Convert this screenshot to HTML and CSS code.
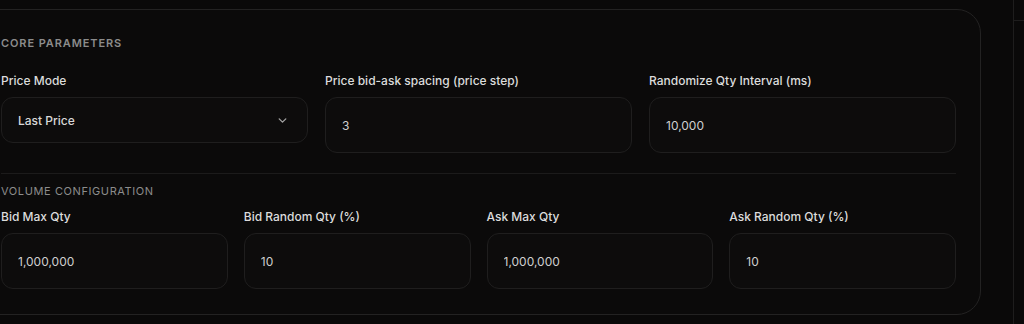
FILE: index.html
```html
<!DOCTYPE html>
<html lang="en">
<head>
    <meta charset="UTF-8">
    <meta name="viewport" content="width=device-width, initial-scale=1.0">
    <title>Market Maker Settings</title>
    <link rel="stylesheet" href="styles.css">
</head>
<body>
    <div class="layout">
        <main class="main">
            <section class="card">
                <h3 class="section-title strong">Core Parameters</h3>
                <div class="grid three">
                    <div class="field">
                        <label for="priceMode">Price Mode</label>
                        <div class="select" id="priceMode">
                            <span>Last Price</span>
                            <svg width="11" height="11" viewBox="0 0 10 10" fill="none">
                                <path d="M2 3.5L5 6.5L8 3.5" stroke="#a3a3a3" stroke-width="1.2" stroke-linecap="round" stroke-linejoin="round"/>
                            </svg>
                        </div>
                    </div>
                    <div class="field">
                        <label for="spacing">Price bid-ask spacing (price step)</label>
                        <input type="text" id="spacing" value="3">
                    </div>
                    <div class="field">
                        <label for="interval">Randomize Qty Interval (ms)</label>
                        <input type="text" id="interval" value="10,000">
                    </div>
                </div>

                <div class="divider"></div>

                <h3 class="section-title">Volume Configuration</h3>
                <div class="grid four">
                    <div class="field">
                        <label for="bidMax">Bid Max Qty</label>
                        <input type="text" id="bidMax" value="1,000,000">
                    </div>
                    <div class="field">
                        <label for="bidRandom">Bid Random Qty (%)</label>
                        <input type="text" id="bidRandom" value="10">
                    </div>
                    <div class="field">
                        <label for="askMax">Ask Max Qty</label>
                        <input type="text" id="askMax" value="1,000,000">
                    </div>
                    <div class="field">
                        <label for="askRandom">Ask Random Qty (%)</label>
                        <input type="text" id="askRandom" value="10">
                    </div>
                </div>
            </section>
        </main>
        <aside class="side">
            <div class="side-top"></div>
        </aside>
    </div>
</body>
</html>
```

FILE: styles.css
```css
* {
    box-sizing: border-box;
}
html, body {
    height: 100%;
}
body {
    margin: 0;
    background: #0a0909;
    font-family: Inter, "Noto Sans", sans-serif;
    color: #e5e5e5;
    overflow: hidden;
}
.layout {
    display: flex;
    height: 100%;
}
.main {
    width: 1013px;
    flex-shrink: 0;
    padding-top: 9px;
}
.card {
    width: 1005px;
    margin-left: -24px;
    border: 1px solid #232222;
    border-radius: 24px;
    padding: 25px 24px 25px;
    background: #0b0a0a;
}
.section-title {
    margin: 0 0 10px;
    font-size: 11px;
    line-height: 16px;
    font-weight: 400;
    text-transform: uppercase;
    letter-spacing: 0.6px;
    color: #8c8c8c;
}
.section-title.strong {
    font-weight: 600;
    letter-spacing: 0.9px;
    margin-bottom: 22px;
}
.grid {
    display: grid;
    gap: 16px;
    align-items: start;
}
.grid.three {
    grid-template-columns: repeat(3, 1fr);
    column-gap: 17px;
}
.grid.four {
    grid-template-columns: repeat(4, 1fr);
}
.field {
    display: flex;
    flex-direction: column;
    gap: 8px;
}
.field label {
    font-size: 12px;
    line-height: 16px;
    font-weight: 500;
    color: #dcdcdc;
}
.field input,
.select {
    height: 56px;
    width: 100%;
    border: 1px solid #1f1e1e;
    border-radius: 12px;
    background: #0d0c0c;
    padding: 0 16px;
    font-family: inherit;
    font-size: 12px;
    color: #cfcfcf;
    outline: none;
}
.select {
    height: 46px;
    display: flex;
    align-items: center;
    justify-content: space-between;
    padding-right: 19px;
    color: #d8d8d8;
    font-weight: 500;
}
.divider {
    height: 1px;
    background: #1c1b1b;
    margin: 20px 0 9px;
}
.side {
    flex: 1;
    border-left: 1px solid #1e1d1d;
}
.side-top {
    height: 21px;
    border-bottom: 1px solid #1e1d1d;
}
```
